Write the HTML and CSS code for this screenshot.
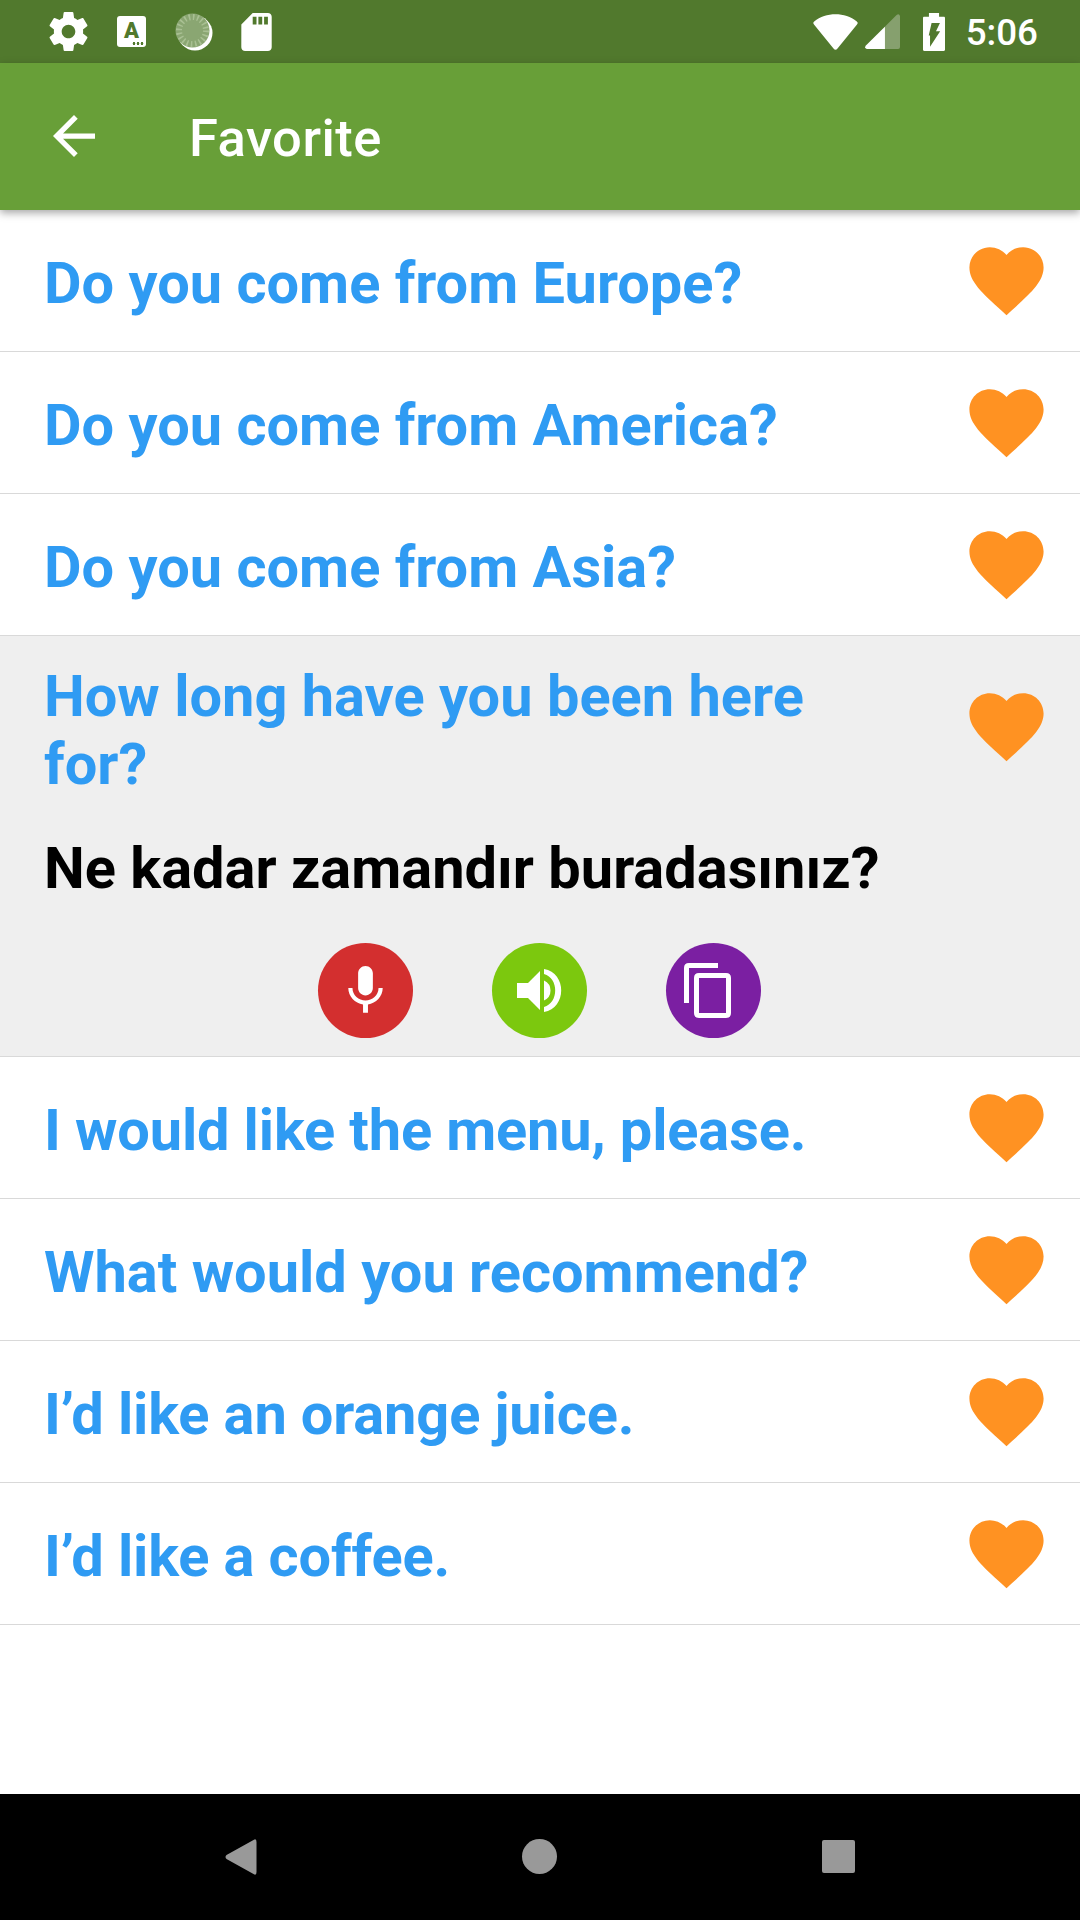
FILE: index.html
```html
<!DOCTYPE html>
<html lang="en">
<head>
  <meta charset="UTF-8" />
  <meta name="viewport" content="width=device-width, initial-scale=1.0"/>
  <title>Favorite</title>
  <link rel="stylesheet" href="styles.css">
</head>
<body>
  <!-- shared heart icon -->
  <svg class="sprite">
    <symbol id="heart" viewBox="0 0 24 24">
      <path d="M12 21.35l-1.45-1.32C5.4 15.36 2 12.28 2 8.5 2 5.42 4.42 3 7.5 3c1.74 0 3.41.81 4.5 2.09C13.09 3.81 14.76 3 16.5 3 19.58 3 22 5.42 22 8.5c0 3.78-3.4 6.86-8.55 11.54L12 21.35z"/>
    </symbol>
  </svg>

  <div class="screen">
    <div class="status-bar">
      <div class="status-left">
        <svg class="icon-gear" viewBox="2 2 20 20"><path d="M19.43 12.98c.04-.32.07-.64.07-.98s-.03-.66-.07-.98l2.11-1.65c.19-.15.24-.42.12-.64l-2-3.46c-.12-.22-.39-.3-.61-.22l-2.49 1c-.52-.4-1.08-.73-1.69-.98l-.38-2.65C14.46 2.18 14.25 2 14 2h-4c-.25 0-.46.18-.49.42l-.38 2.65c-.61.25-1.17.59-1.69.98l-2.49-1c-.23-.09-.49 0-.61.22l-2 3.46c-.13.22-.07.49.12.64l2.11 1.65c-.04.32-.07.65-.07.98s.03.66.07.98l-2.11 1.65c-.19.15-.24.42-.12.64l2 3.46c.12.22.39.3.61.22l2.49-1c.52.4 1.08.73 1.69.98l.38 2.65c.03.24.24.42.49.42h4c.25 0 .46-.18.49-.42l.38-2.65c.61-.25 1.17-.59 1.69-.98l2.49 1c.23.09.49 0 .61-.22l2-3.46c.12-.22.07-.49-.12-.64l-2.11-1.65zM12 15.5c-1.93 0-3.5-1.57-3.5-3.5s1.57-3.5 3.5-3.5 3.5 1.57 3.5 3.5-1.57 3.5-3.5 3.5z"/></svg>
        <div class="icon-letter">A<span class="dots"></span></div>
        <svg class="icon-sync" viewBox="0 0 38 38">
          <circle cx="20" cy="20" r="17.5"/>
          <circle class="sync-face" cx="17.5" cy="17.5" r="17"/>
          <circle class="sync-ticks" cx="17.5" cy="17.5" r="13.5"/>
        </svg>
        <svg class="icon-sd" viewBox="4 2 16 20"><path d="M18 2h-8L4.02 8 4 20c0 1.1.9 2 2 2h12c1.1 0 2-.9 2-2V4c0-1.1-.9-2-2-2zm-6 6h-2V4h2v4zm3 0h-2V4h2v4zm3 0h-2V4h2v4z"/></svg>
      </div>
      <div class="status-right">
        <svg class="icon-wifi" viewBox="0 0 45 36"><path d="M1.2 10.8Q-.6 9 1.2 7.4C13-2.3 32-2.3 43.8 7.4Q45.6 9 43.8 10.8L24.5 34.5Q22.5 37 20.5 34.5Z"/></svg>
        <svg class="icon-signal" viewBox="0 0 36 36">
          <path class="dim" d="M36 2v32q0 2-2 2H2q-3-1-1-3.500L32.500 1Q35-1 36 2z"/>
          <path d="M20.500 13v23H2q-3-1-1-3.500z"/>
        </svg>
        <svg class="icon-battery" viewBox="7 2 10 20" preserveAspectRatio="none"><path d="M16.400 4H14.300V2H9.700v2H7.600C7.200 4 7 4.200 7 4.600v16.800C7 21.800 7.200 22 7.600 22h8.800c.4 0 .6-.2 .6-.6V4.600C17 4.200 16.800 4 16.400 4zM10.200 19.800v-6H9.600l1.300-6.500h3.800l-1.800 4.300h1.900l-4.600 8.200z"/></svg>
        <span class="clock">5:06</span>
      </div>
    </div>

    <header class="app-bar">
      <svg class="back" viewBox="4 4 16 16"><path d="M20 11H7.830l5.590-5.590L12 4l-8 8 8 8 1.410-1.410L7.830 13H20v-2z"/></svg>
      <h1>Favorite</h1>
    </header>

    <main class="list">
      <div class="item">
        <div class="phrase"><p>Do you come from Europe?</p><svg class="heart"><use href="#heart"/></svg></div>
      </div>
      <div class="item">
        <div class="phrase"><p>Do you come from America?</p><svg class="heart"><use href="#heart"/></svg></div>
      </div>
      <div class="item">
        <div class="phrase"><p>Do you come from Asia?</p><svg class="heart"><use href="#heart"/></svg></div>
      </div>
      <div class="item open">
        <div class="phrase"><p>How long have you been here for?</p><svg class="heart"><use href="#heart"/></svg></div>
        <p class="translation">Ne kadar zamandır buradasınız?</p>
        <div class="actions">
          <button class="round mic" aria-label="Record">
            <svg viewBox="0 0 24 24"><path d="M12 14c1.660 0 2.990-1.340 2.990-3L15 5c0-1.660-1.340-3-3-3S9 3.340 9 5v6c0 1.660 1.340 3 3 3zm5.300-3c0 3-2.540 5.100-5.300 5.100S6.700 14 6.700 11H5c0 3.410 2.720 6.230 6 6.720V21h2v-3.280c3.280-.48 6-3.300 6-6.720h-1.700z"/></svg>
          </button>
          <button class="round speak" aria-label="Listen">
            <svg viewBox="0 0 95 95"><path d="M25 40h11l12-12v39L36 55H25zM52 37.500q6.500 3 6.500 10t-6.500 10zM52 26c23 4 23 39 0 43v-5c15-4 15-29 0-33z"/></svg>
          </button>
          <button class="round copy" aria-label="Copy">
            <svg viewBox="0 0 95 95"><path d="M52 20v5H23v35h-5V25q0-5 5-5zM33 30h27q5 0 5 5v35q0 5-5 5H33q-5 0-5-5V35q0-5 5-5zM33 35v35h27V35z"/></svg>
          </button>
        </div>
      </div>
      <div class="item">
        <div class="phrase"><p class="tight">I would like the menu, please.</p><svg class="heart"><use href="#heart"/></svg></div>
      </div>
      <div class="item">
        <div class="phrase"><p>What would you recommend?</p><svg class="heart"><use href="#heart"/></svg></div>
      </div>
      <div class="item">
        <div class="phrase"><p class="tight">I’d like an orange juice.</p><svg class="heart"><use href="#heart"/></svg></div>
      </div>
      <div class="item">
        <div class="phrase"><p class="tight">I’d like a coffee.</p><svg class="heart"><use href="#heart"/></svg></div>
      </div>
    </main>

    <nav class="nav-bar">
      <svg class="nav-back" viewBox="0 0 32 36"><path d="M28.500 1Q31.500-1 31.500 3v30q0 4-3 2L1.500 20q-2-2 0-4z"/></svg>
      <span class="nav-home"></span>
      <span class="nav-recent"></span>
    </nav>
  </div>
</body>
</html>
```
FILE: styles.css
```css
/* GLOBAL */
* {
  box-sizing: border-box;
  margin: 0;
  padding: 0;
}
body {
  font-family: Roboto, sans-serif;
  background-color: #fff;
}
svg {
  display: block;
  flex: none;
  fill: #fff;
}
.sprite {
  display: none;
}
.screen {
  display: flex;
  flex-direction: column;
  width: 1080px;
  height: 1920px;
}

/* STATUS BAR */
.status-bar {
  display: flex;
  justify-content: space-between;
  height: 63px;
  padding: 0 42px 0 49px;
  background-color: #51792d;
}
.status-left,
.status-right {
  display: flex;
  align-items: center;
}
.icon-gear {
  width: 39px;
  height: 39px;
  margin-right: 29px;
}
.icon-letter {
  position: relative;
  width: 29px;
  height: 31px;
  margin-right: 29px;
  border-radius: 3px;
  background-color: #fff;
  color: #51792d;
  font-size: 22px;
  font-weight: 900;
  line-height: 29px;
  text-align: center;
}
.dots {
  position: absolute;
  right: 2px;
  bottom: 2px;
  width: 12px;
  height: 3px;
  background: radial-gradient(circle, #51792d 1.2px, transparent 1.6px) 0 0 / 4px 3px;
}
.icon-sync {
  width: 38px;
  height: 38px;
  margin-right: 28px;
}
.sync-face {
  fill: #8aa672;
}
.sync-ticks {
  fill: none;
  stroke: #a9c093;
  stroke-width: 6;
  stroke-dasharray: 1.6 2.640;
}
.icon-sd {
  width: 31px;
  height: 38px;
}
.icon-wifi {
  width: 45px;
  height: 36px;
  margin-right: 7px;
}
.icon-signal {
  width: 35px;
  height: 35px;
  margin-right: 23px;
}
.dim {
  fill: #86a06e;
}
.icon-battery {
  width: 22px;
  height: 38px;
  margin-right: 21px;
}
.clock {
  padding-top: 2px;
  color: #fff;
  font-size: 36.75px;
  font-weight: 500;
}

/* APP BAR */
.app-bar {
  position: relative;
  display: flex;
  align-items: center;
  height: 147px;
  padding: 0 0 1px 53px;
  background-color: #689f38;
  box-shadow: 0 3px 8px rgba(0, 0, 0, 0.35);
}
.back {
  width: 42px;
  height: 42px;
}
h1 {
  margin-left: 94px;
  padding-top: 3px;
  color: #fff;
  font-size: 52.5px;
  font-weight: 500;
  letter-spacing: 0.5px;
}

/* PHRASE LIST */
.list {
  flex: 1;
}
.item {
  border-bottom: 1px solid #d9d9d9;
}
.phrase {
  display: flex;
  align-items: center;
  justify-content: space-between;
  height: 141px;
  padding: 0 29px 0 44px;
}
.phrase p,
.translation {
  color: #2f9bf3;
  font-size: 57.75px;
  font-weight: 700;
  line-height: 68px;
}
.phrase p {
  width: 850px;
  padding-top: 4px;
}
.phrase .tight {
  letter-spacing: -0.14px;
}
.heart {
  width: 89px;
  height: 89px;
  fill: #ff9222;
}
.open {
  background-color: #efefef;
}
.open .phrase {
  height: 180px;
}
.open .phrase p {
  padding-top: 8px;
}
.open .translation {
  padding: 18px 44px 0;
  color: #000;
}

/* ROUND BUTTONS */
.actions {
  display: flex;
  justify-content: center;
  gap: 79px;
  padding: 41px 2px 18px 0;
}
.round {
  display: flex;
  align-items: center;
  justify-content: center;
  width: 95px;
  height: 95px;
  border: none;
  border-radius: 50%;
}
.mic {
  background-color: #d32f2f;
}
.mic svg {
  width: 59px;
  height: 59px;
}
.speak {
  background-color: #7cc80e;
}
.copy {
  background-color: #7b1fa2;
}
.speak svg,
.copy svg {
  width: 95px;
  height: 95px;
}

/* NAVIGATION BAR */
.nav-bar {
  display: flex;
  align-items: center;
  justify-content: space-between;
  height: 126px;
  padding: 0 225px 1px;
  background-color: #000;
}
.nav-back {
  width: 32px;
  height: 36px;
  fill: #999;
}
.nav-home {
  width: 35px;
  height: 35px;
  border-radius: 50%;
  background-color: #999;
}
.nav-recent {
  width: 33px;
  height: 33px;
  border-radius: 2px;
  background-color: #999;
}
```
